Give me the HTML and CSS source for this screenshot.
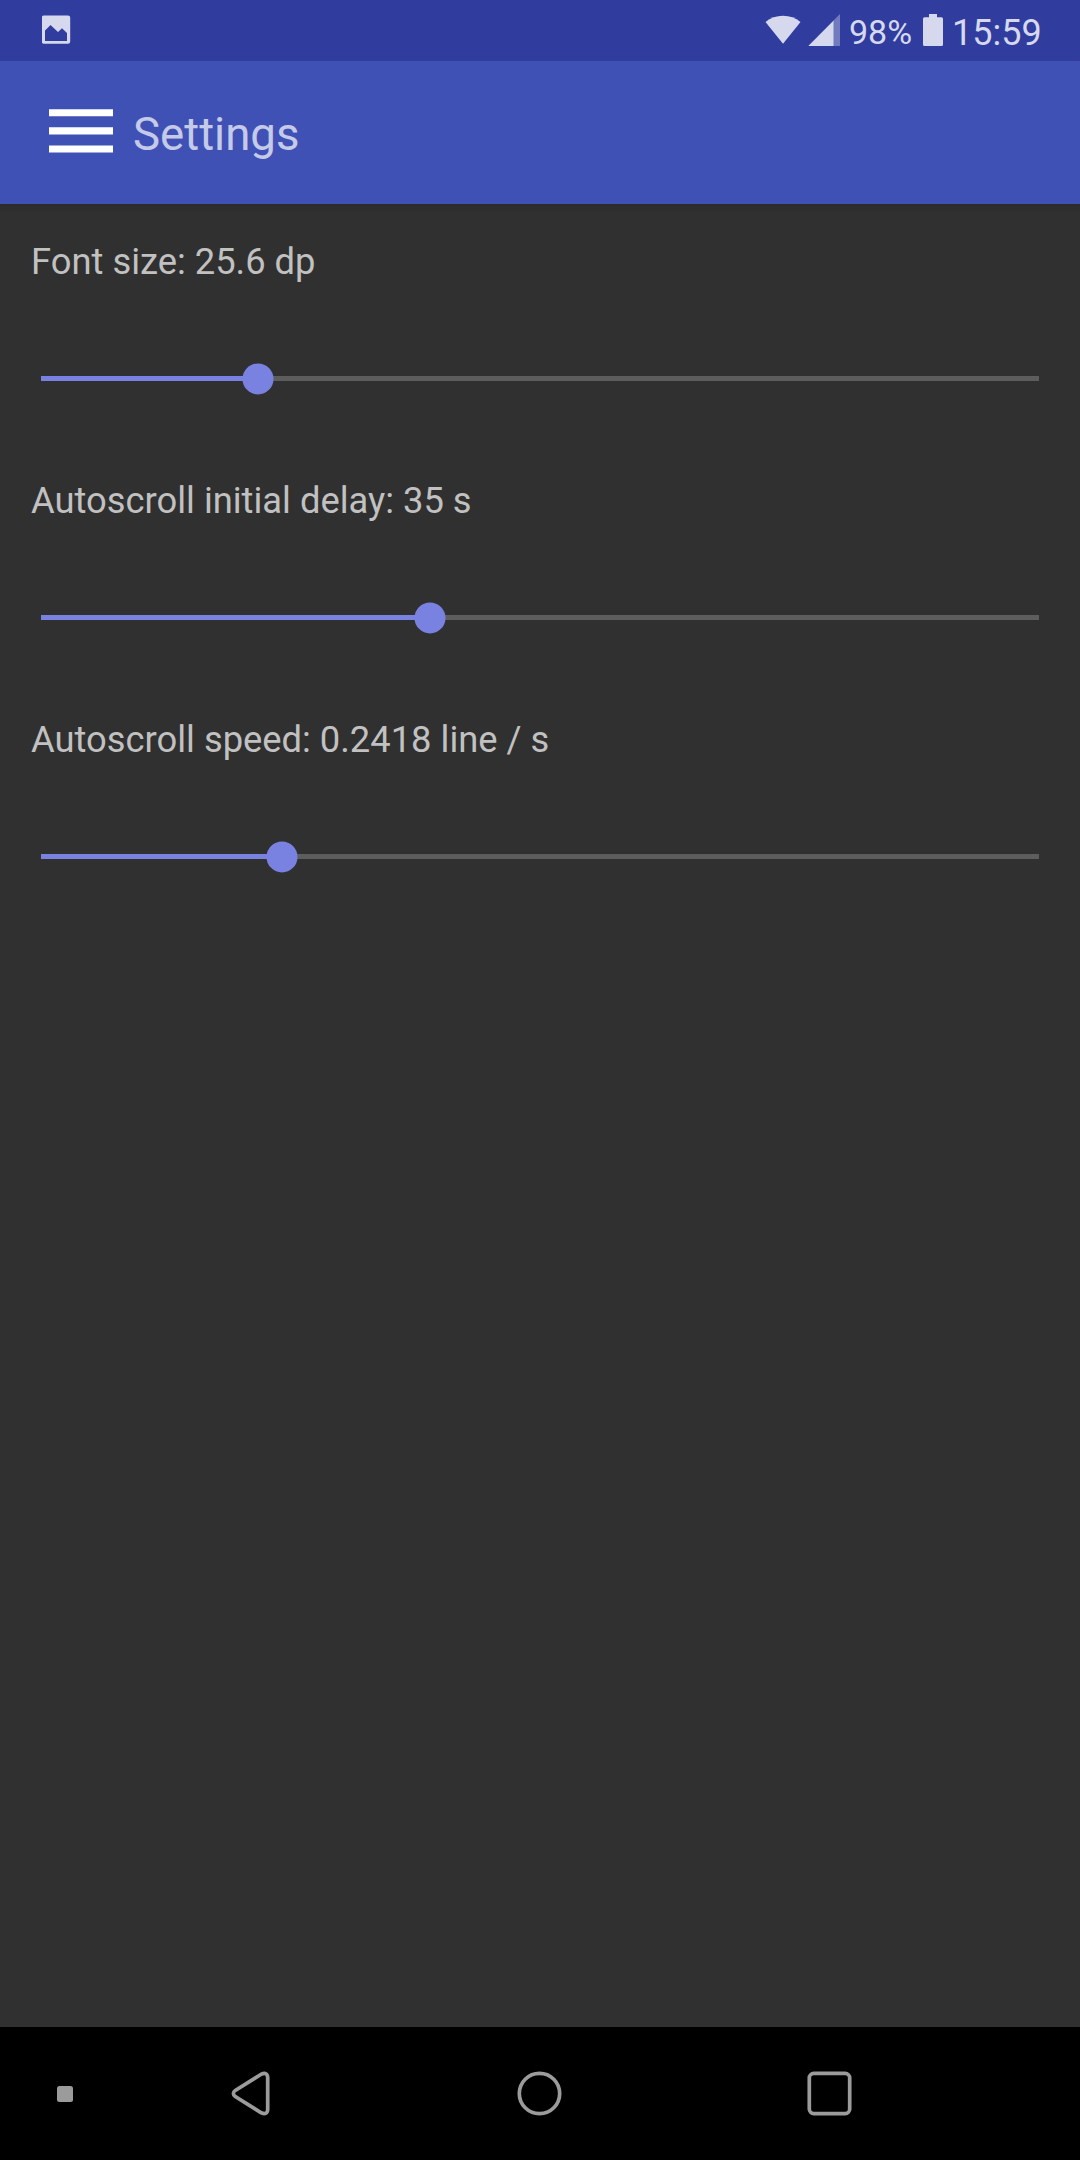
FILE: index.html
```html
<!DOCTYPE html>
<html lang="en">
<head>
<meta charset="utf-8">
<title>Settings</title>
<link rel="stylesheet" href="styles.css">
</head>
<body>
<div class="screen">
  <div class="status-bar">
    <svg class="status-picture" width="30" height="30" viewBox="0 0 30 30"><path fill-rule="evenodd" d="M2 0.500H26Q28.200 0.500 28.200 2.500V26.500Q28.200 28.800 26 28.800H2Q-0.200 28.800 -0.200 26.500V2.500Q-0.200 0.500 2 0.500ZM3 15.500V26H25V18L20 13.300L16 17L8.500 10Z"/></svg>
    <svg class="status-wifi" width="36" height="30" viewBox="0 0 36 30"><path d="M0.500 7Q8 0.700 18 0.700T35.500 7L18 28.800Z"/></svg>
    <svg class="status-signal" width="32" height="32" viewBox="0 0 32 32"><path opacity=".4" d="M25.500 6.500L32 0V32H25.500Z"/><path d="M0.300 32L25.600 6.400V32Z"/></svg>
    <span class="battery-level">98%</span>
    <svg class="status-battery" width="20" height="32" viewBox="0 0 20 32"><path d="M6 0H14V3.200H18.500Q20 3.200 20 4.700V30.500Q20 32 18.500 32H1.500Q0 32 0 30.500V4.700Q0 3.200 1.500 3.200H6Z"/></svg>
    <span class="clock">15:59</span>
  </div>
  <header class="app-bar">
    <svg class="menu" width="64" height="46" viewBox="0 0 64 46"><path d="M0 1.200H64V8.200H0ZM0 19.200H64V26.600H0ZM0 37.400H64V44.600H0Z"/></svg>
    <h1 class="title">Settings</h1>
  </header>
  <main class="settings">
    <section class="setting">
      <div class="label">Font size: 25.6 dp</div>
      <div class="slider"><div class="fill" style="width:202px"></div><div class="thumb"></div><div class="rest"></div></div>
    </section>
    <section class="setting">
      <div class="label">Autoscroll initial delay: 35 s</div>
      <div class="slider"><div class="fill" style="width:374px"></div><div class="thumb"></div><div class="rest"></div></div>
    </section>
    <section class="setting">
      <div class="label">Autoscroll speed: 0.2418 line / s</div>
      <div class="slider"><div class="fill" style="width:226px"></div><div class="thumb"></div><div class="rest"></div></div>
    </section>
  </main>
  <nav class="nav-bar">
    <svg class="nav-dot" width="16" height="16" viewBox="0 0 16 16"><rect width="16" height="16" rx="2.500"/></svg>
    <svg class="nav-back" width="40" height="46" viewBox="0 0 40 46"><path d="M30.200 3.200L4.300 19.400Q0.500 22.300 4.300 25.600L30.200 41.800Q36.400 44.300 36.700 38.500V6.500Q36.400 .700 30.200 3.200Z"/></svg>
    <svg class="nav-home" width="46" height="46" viewBox="0 0 46 46"><circle cx="22.500" cy="22.500" r="20.200"/></svg>
    <svg class="nav-recent" width="46" height="46" viewBox="0 0 46 46"><rect x="2.300" y="2.400" width="40.400" height="40.200" rx="4.500"/></svg>
  </nav>
</div>
</body>
</html>
```
FILE: styles.css
```css
body {
  margin: 0;
  font-family: Roboto, sans-serif;
}

svg {
  display: block;
  flex: none;
}

.screen {
  display: flex;
  flex-direction: column;
  width: 1080px;
  height: 2160px;
  background: #303030;
}

.status-bar {
  display: flex;
  align-items: flex-start;
  height: 61px;
  background: #303d9f;
  color: #d6d9ed;
  fill: #d6d9ed;
}

.status-picture { margin: 15px 0 0 42px; }
.status-wifi { margin: 15px 7px 0 auto; }
.status-signal { margin: 14px 9px 0 0; }
.status-battery { margin: 14px 9px 0 0; }

.battery-level {
  width: 74px;
  margin-top: 12px;
  font-size: 34px;
  line-height: 40px;
  white-space: nowrap;
}

.clock {
  width: 128px;
  margin-top: 12px;
  font-size: 36px;
  line-height: 43px;
  white-space: nowrap;
}

.app-bar {
  display: flex;
  align-items: flex-start;
  height: 143px;
  background: #3f51b5;
}

.menu {
  margin: 47px 20px 0 49px;
  fill: #fff;
}

.title {
  margin: 46px 0 0;
  color: #c5cae9;
  font-size: 45.600px;
  font-weight: 400;
  line-height: 56px;
}

.settings {
  flex: 1;
  padding: 37px 41px 0;
  background: linear-gradient(#2b2b2b, #303030 10px);
}

.setting { height: 239px; }

.label {
  margin-left: -10px;
  color: #c1c1c1;
  font-size: 36.350px;
  line-height: 42px;
}

.slider {
  display: flex;
  align-items: center;
  height: 31px;
  margin-top: 80px;
}

.fill,
.rest {
  height: 5px;
  background: #7a82e1;
}

.rest {
  flex: 1;
  background: #5d5d5d;
}

.thumb {
  width: 31px;
  height: 31px;
  margin: 0 -1px;
  border-radius: 50%;
  background: #7a82e1;
  transform: translate(.5px, .4px);
}

.nav-bar {
  display: flex;
  align-items: flex-start;
  height: 133px;
  background: #000;
  fill: none;
  stroke: #9b9b9b;
  stroke-width: 3.7;
}

.nav-dot {
  margin: 59px 0 0 57px;
  fill: #9b9b9b;
  stroke: none;
}

.nav-back { margin: 44px 0 0 158px; }
.nav-home { margin: 44px 0 0 246px; }
.nav-recent { margin: 44px 0 0 244px; }
```
